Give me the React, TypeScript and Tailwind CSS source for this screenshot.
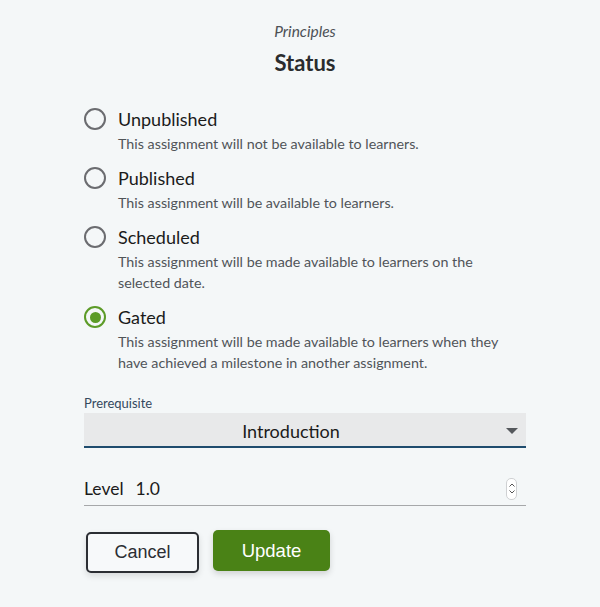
import { useState } from "react";

type Option = {
  id: string;
  label: string;
  description: string;
};

const options: Option[] = [
  {
    id: "unpublished",
    label: "Unpublished",
    description: "This assignment will not be available to learners.",
  },
  {
    id: "published",
    label: "Published",
    description: "This assignment will be available to learners.",
  },
  {
    id: "scheduled",
    label: "Scheduled",
    description:
      "This assignment will be made available to learners on the selected date.",
  },
  {
    id: "gated",
    label: "Gated",
    description:
      "This assignment will be made available to learners when they have achieved a milestone in another assignment.",
  },
];

function Radio({ checked }: { checked: boolean }) {
  return (
    <span
      className={
        "mt-px flex h-[22px] w-[22px] shrink-0 items-center justify-center rounded-full border-[2.5px] " +
        (checked ? "border-[#5c9b27]" : "border-[#6b6c70]")
      }
    >
      {checked && <span className="h-[11px] w-[11px] rounded-full bg-[#5c9b27]" />}
    </span>
  );
}

export default function App() {
  const [status, setStatus] = useState("gated");
  const [level, setLevel] = useState("1.0");

  return (
    <div
      className="min-h-[607px] w-full bg-[#f4f7f8] text-[#1b1b1b]"
      style={{ fontFamily: "Lato, 'Noto Sans', sans-serif" }}
    >
      <div className="ml-[84px] w-[442px] pt-[21px]">
        <div className="text-center text-[15.5px] leading-[20px] italic text-[#4d5156]">
          Principles
        </div>
        <h1 className="mt-[7px] text-center text-[22px] leading-[30px] font-bold text-[#2a2c2e]">
          Status
        </h1>

        <div className="mt-[29px] flex flex-col gap-[12px]">
          {options.map((o) => (
            <label
              key={o.id}
              className="flex cursor-pointer items-start gap-[12px]"
              onClick={() => setStatus(o.id)}
            >
              <Radio checked={status === o.id} />
              <div className="min-w-0 flex-1">
                <div className="text-[18px] leading-[24px]">{o.label}</div>
                <p className="mt-[2px] pr-[20px] text-[14.3px] leading-[21px] text-[#505458]">
                  {o.description}
                </p>
              </div>
            </label>
          ))}
        </div>

        <div className="mt-[21px]">
          <div className="text-[13px] leading-[18px] text-[#34495e]">Prerequisite</div>
          <div className="relative mt-px flex h-[35px] items-center justify-center border-b-2 border-[#1f4c6e] bg-[#e8e9ea] pr-[28px]">
            <span className="mt-[2px] text-[18px] leading-[24px]">Introduction</span>
            <svg
              className="absolute right-[8px] top-[15px]"
              width="12"
              height="6"
              viewBox="0 0 12 6"
            >
              <path d="M0 0h12L6 6z" fill="#55585c" />
            </svg>
          </div>
        </div>

        <div className="mt-[24px] flex h-[34px] items-center border-b border-[#a6a8aa]">
          <span className="text-[17.5px] leading-[24px]">Level</span>
          <input
            value={level}
            onChange={(e) => setLevel(e.target.value)}
            className="ml-[12px] min-w-0 flex-1 bg-transparent text-[17.5px] leading-[24px] outline-none"
            style={{ fontFamily: "Lato, sans-serif" }}
          />
          <span className="mr-[9px] flex h-[22px] w-[11px] flex-col items-center justify-center gap-[3px] rounded-[5px] border border-[#cfd1d3] bg-white">
            <svg width="6" height="4" viewBox="0 0 6 4">
              <path d="M0.5 3.5L3 1l2.5 2.5" stroke="#555" strokeWidth="1" fill="none" />
            </svg>
            <svg width="6" height="4" viewBox="0 0 6 4">
              <path d="M0.5 0.5L3 3l2.5-2.5" stroke="#555" strokeWidth="1" fill="none" />
            </svg>
          </span>
        </div>

        <div
          className="mt-[24px] flex items-start gap-[14px] pl-[2px]"
          style={{ fontFamily: "'Liberation Sans', Arial, sans-serif" }}
        >
          <button className="mt-[2px] h-[41px] w-[113px] rounded-[5px] border-2 border-[#2b2e33] bg-[#f7f9fa] text-[18px] text-[#2b2e33] shadow-[0_3px_6px_rgba(0,0,0,0.12)]">
            Cancel
          </button>
          <button className="h-[41px] w-[117px] rounded-[5px] bg-[#4a8216] text-[18.5px] text-white shadow-[0_3px_6px_rgba(0,0,0,0.15)]">
            Update
          </button>
        </div>
      </div>
    </div>
  );
}
